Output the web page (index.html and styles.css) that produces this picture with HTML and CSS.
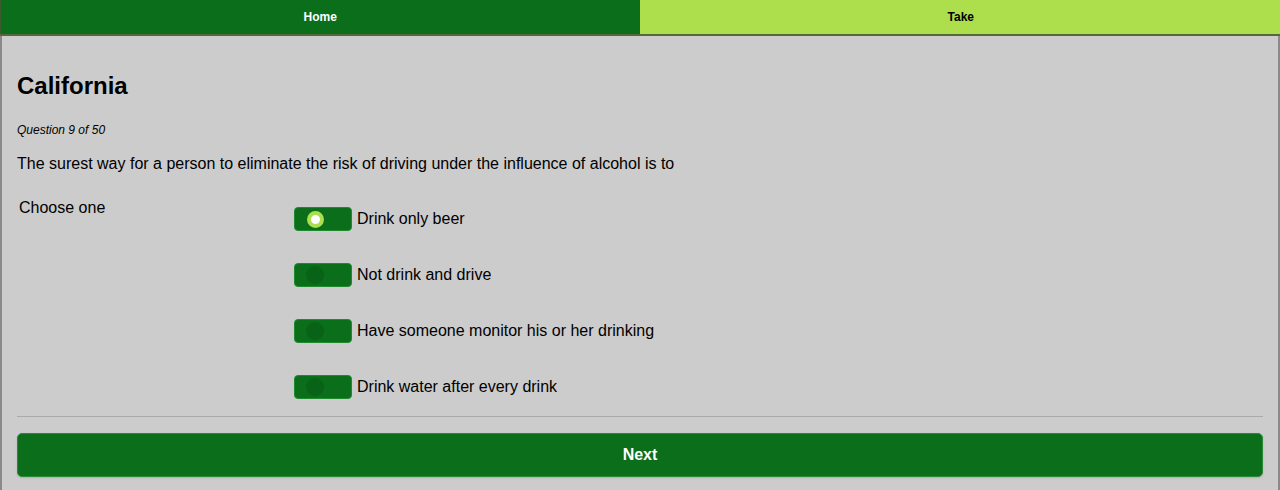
FILE: index.html
```html
<!DOCTYPE html>
<html>
<head>
<meta charset="utf-8">
<link rel="stylesheet" href="styles.css">
</head>
<body>
<nav class="nav">
  <a class="nav-item nav-home">Home</a>
  <a class="nav-item nav-take">Take</a>
</nav>
<main class="frame">
  <h1 class="title">California</h1>
  <p class="counter">Question 9 of 50</p>
  <p class="question">The surest way for a person to eliminate the risk of driving under the influence of alcohol is to</p>
  <div class="choice">
    <div class="choice-label">Choose one</div>
    <div class="options">
      <label class="option"><span class="toggle"><span class="knob knob-on"></span></span><span class="option-text">Drink only beer</span></label>
      <label class="option"><span class="toggle"><span class="knob"></span></span><span class="option-text">Not drink and drive</span></label>
      <label class="option"><span class="toggle"><span class="knob"></span></span><span class="option-text">Have someone monitor his or her drinking</span></label>
      <label class="option"><span class="toggle"><span class="knob"></span></span><span class="option-text">Drink water after every drink</span></label>
    </div>
  </div>
  <hr class="rule">
  <button class="next">Next</button>
</main>
</body>
</html>
```

FILE: styles.css
```css
html, body {
  margin: 0;
  padding: 0;
  background: #cccccc;
  font-family: "Liberation Sans", Arial, sans-serif;
  color: #000;
}
body {
  height: 490px;
  overflow: hidden;
}
.nav {
  display: flex;
  height: 34px;
  border-bottom: 2px solid #55683c;
}
.nav-item {
  flex: 1;
  display: flex;
  align-items: center;
  justify-content: center;
  font-size: 12px;
  font-weight: bold;
}
.nav-home {
  background: #0a6e1b;
  color: #fff;
  border-left: 1px solid #3f5a30;
}
.nav-take {
  background: #addf4c;
  color: #000;
  padding-left: 2px;
}
.frame {
  border-left: 2px solid #8a8a8a;
  border-right: 2px solid #8a8a8a;
  padding: 0 15px;
  height: 454px;
  box-sizing: border-box;
  overflow: hidden;
}
.title {
  margin: 36px 0 0;
  font-size: 24px;
  line-height: 28px;
  font-weight: bold;
}
.counter {
  margin: 23px 0 0;
  font-size: 12px;
  line-height: 14px;
  font-style: italic;
}
.question {
  margin: 18px 0 0;
  font-size: 16px;
  line-height: 18px;
}
.choice {
  display: flex;
  margin-top: 26px;
}
.choice-label {
  width: 275px;
  padding-left: 2px;
  font-size: 16px;
  line-height: 18px;
}
.options {
  display: flex;
  flex-direction: column;
  gap: 32px;
  padding-top: 8px;
}
.option {
  display: flex;
  align-items: center;
  gap: 5px;
  font-size: 16px;
  line-height: 18px;
}
.toggle {
  width: 58px;
  height: 24px;
  box-sizing: border-box;
  background: #0a6e1b;
  border: 1px solid #1f8a2e;
  border-radius: 4px;
  display: flex;
  align-items: center;
  padding-left: 11px;
}
.knob {
  width: 18px;
  height: 18px;
  border-radius: 50%;
  background: #086218;
  box-sizing: border-box;
}
.knob-on {
  width: 17px;
  height: 17px;
  background: #fff;
  border: 4.5px solid #addf4c;
  margin-left: 1px;
}
.rule {
  margin: 17px 0 0;
  border: 0;
  border-top: 1px solid #aaaaaa;
  height: 0;
}
.next {
  display: block;
  width: 100%;
  height: 44px;
  margin-top: 16px;
  background: #0a6e1b;
  border: 1px solid #2a8a36;
  border-radius: 5px;
  color: #fff;
  font-family: "Liberation Sans", Arial, sans-serif;
  font-size: 16px;
  font-weight: bold;
  box-shadow: 0 1px 2px rgba(0,0,0,0.15);
}
```
